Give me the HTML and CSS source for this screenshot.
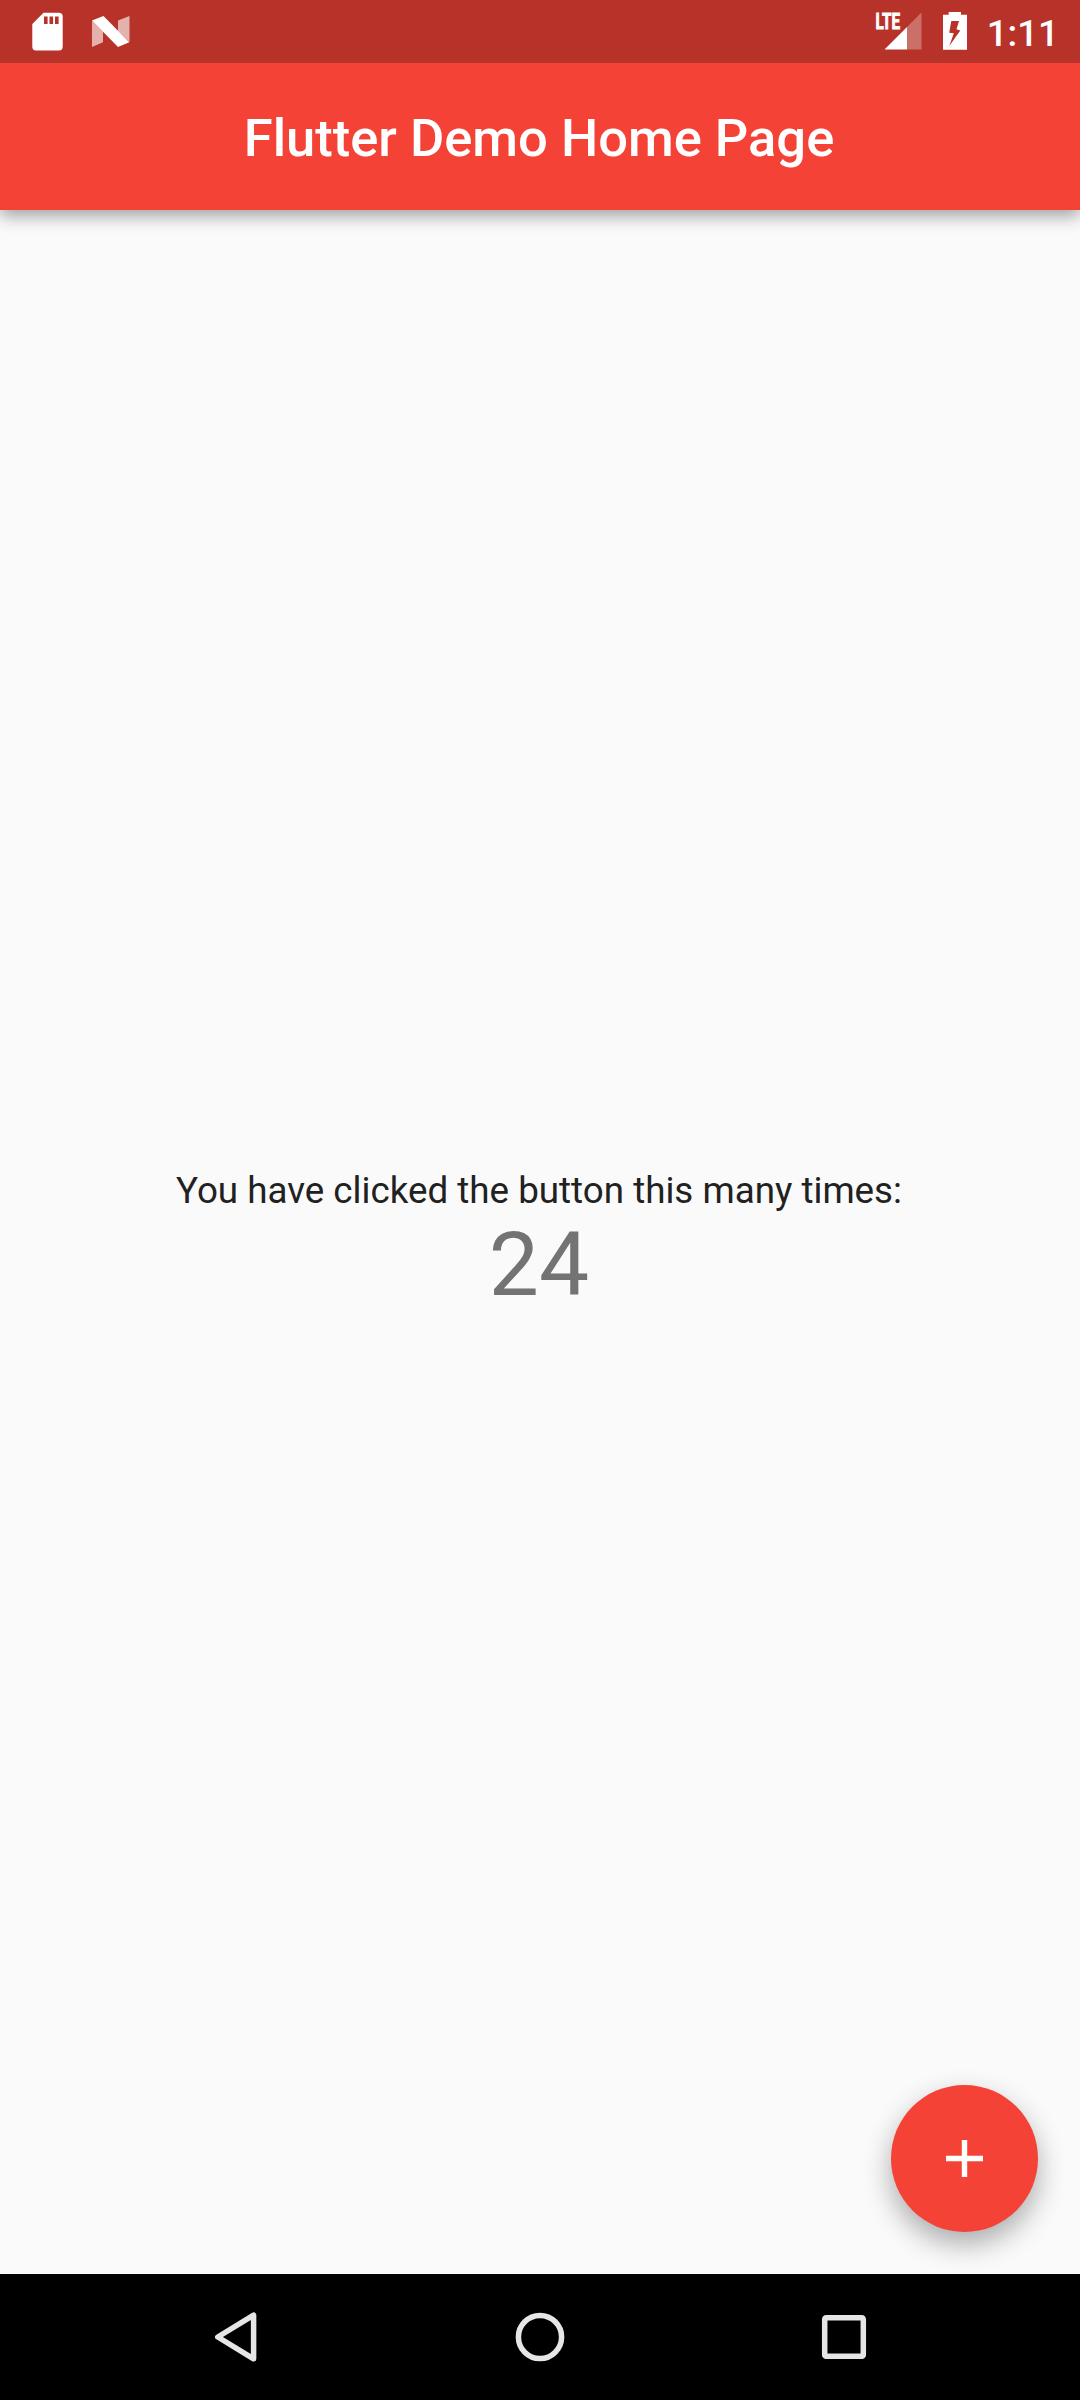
FILE: index.html
```html
<!DOCTYPE html>
<html lang="en">
<head>
<meta charset="utf-8">
<title>Flutter Demo Home Page</title>
<link rel="stylesheet" href="styles.css">
</head>
<body>
<div class="screen">
  <header class="header">
    <div class="status-bar">
      <svg class="notifications" viewBox="0 0 160 63" aria-hidden="true">
        <path fill="#fff" fill-rule="evenodd" d="M43.5 12.7H59q3.7 0 3.7 3.7v30.4q0 3.7-3.7 3.7H36q-3.7 0-3.7-3.7V24zM44 16.5v7.6h3.6v-7.6zM49.5 16.5v7.6h3.6v-7.6zM55 16.5v7.6h3.6v-7.6z"/>
        <path fill="#fff" opacity=".62" d="M92 20.5 103 31.500V42.300L92 47zM118 20.500 129.500 16V42L118 31z"/>
        <path fill="#fff" d="M92 20.500 103.500 16 129.300 42.200 118 47z"/>
      </svg>
      <div class="status-right">
        <svg class="indicators" viewBox="870 0 105 63" aria-hidden="true">
          <path fill="#fff" opacity=".3" d="M907 27 921.500 12.500V49.500H907z"/>
          <path fill="#fff" d="M884.500 49.500 907 27V49.500z"/>
          <text class="network" x="875.500" y="29" textLength="24.500" lengthAdjust="spacingAndGlyphs">LTE</text>
          <path fill="#fff" fill-rule="evenodd" d="M948.700 12h12.300v2.700h6V49.700H943V14.700h5.700zM951.300 21 949.200 32.700 953.800 33.200 949.300 46 960.300 30.500 956.500 29.200 959 21z"/>
        </svg>
        <span class="clock">1:11</span>
      </div>
    </div>
    <div class="app-bar"><h1 class="title">Flutter Demo Home Page</h1></div>
  </header>
  <main class="content">
    <p class="message">You have clicked the button this many times:</p>
    <p class="count">24</p>
    <button class="fab" aria-label="Increment">
      <svg class="plus" viewBox="0 0 37 37"><path fill="#fff" d="M15.800 0h5.400v15.800H37v5.400H21.200V37h-5.400V21.200H0v-5.400h15.800z"/></svg>
    </button>
  </main>
  <nav class="nav-bar">
    <svg class="nav-icon" viewBox="0 0 60 60"><path d="M11.800 30 47.600 8.200V51.800z"/></svg>
    <svg class="nav-icon" viewBox="0 0 60 60"><circle cx="30" cy="30" r="21.600"/></svg>
    <svg class="nav-icon" viewBox="0 0 60 60"><rect x="10.700" y="10.700" width="38.600" height="38.600" rx="1.500"/></svg>
  </nav>
</div>
</body>
</html>
```
FILE: styles.css
```css
* {
  box-sizing: border-box;
}

body,
h1,
p {
  margin: 0;
}

body {
  font-family: Roboto, sans-serif;
  background: #fafafa;
}

.screen {
  display: flex;
  flex-direction: column;
  width: 1080px;
  height: 2400px;
  overflow: hidden;
}

.header {
  position: relative;
  z-index: 1;
  background: #f44336;
  color: #fff;
  box-shadow: 0 6px 16px rgba(0, 0, 0, 0.36);
}

.status-bar {
  display: flex;
  justify-content: space-between;
  height: 63px;
  background: #b73229;
}

.notifications {
  width: 160px;
  height: 63px;
}

.status-right {
  display: flex;
  align-items: center;
  gap: 12px;
  padding-right: 21px;
}

.indicators {
  width: 105px;
  height: 63px;
}

.network {
  fill: #fff;
  stroke: #fff;
  stroke-width: 0.9px;
  font-family: Roboto, sans-serif;
  font-size: 21.500px;
  font-weight: 700;
}

.clock {
  padding-top: 3px;
  font-size: 36.750px;
  font-weight: 500;
  line-height: 43px;
}

.app-bar {
  display: flex;
  align-items: center;
  justify-content: center;
  height: 147px;
  padding: 2px 2px 0 0;
}

.title {
  font-size: 52.500px;
  font-weight: 500;
  line-height: 62px;
}

.content {
  position: relative;
  flex: 1;
  display: flex;
  flex-direction: column;
  align-items: center;
  justify-content: center;
  padding: 2px 2px 0 0;
}

.message {
  color: #212121;
  font-size: 36.750px;
  line-height: 43px;
}

.count {
  color: #737373;
  font-size: 89.250px;
  line-height: 105px;
}

.fab {
  position: absolute;
  right: 42px;
  bottom: 42px;
  display: flex;
  align-items: center;
  justify-content: center;
  width: 147px;
  height: 147px;
  padding: 0;
  border: 0;
  border-radius: 50%;
  background: #f44336;
  box-shadow: 0 12px 28px rgba(0, 0, 0, 0.32);
}

.plus {
  width: 37px;
  height: 37px;
}

.nav-bar {
  position: relative;
  display: flex;
  align-items: center;
  justify-content: center;
  gap: 244px;
  height: 126px;
  background: #000;
}

.nav-icon {
  width: 60px;
  height: 60px;
  fill: none;
  stroke: #e6e6e6;
  stroke-width: 5.500px;
  stroke-linejoin: round;
}
```
